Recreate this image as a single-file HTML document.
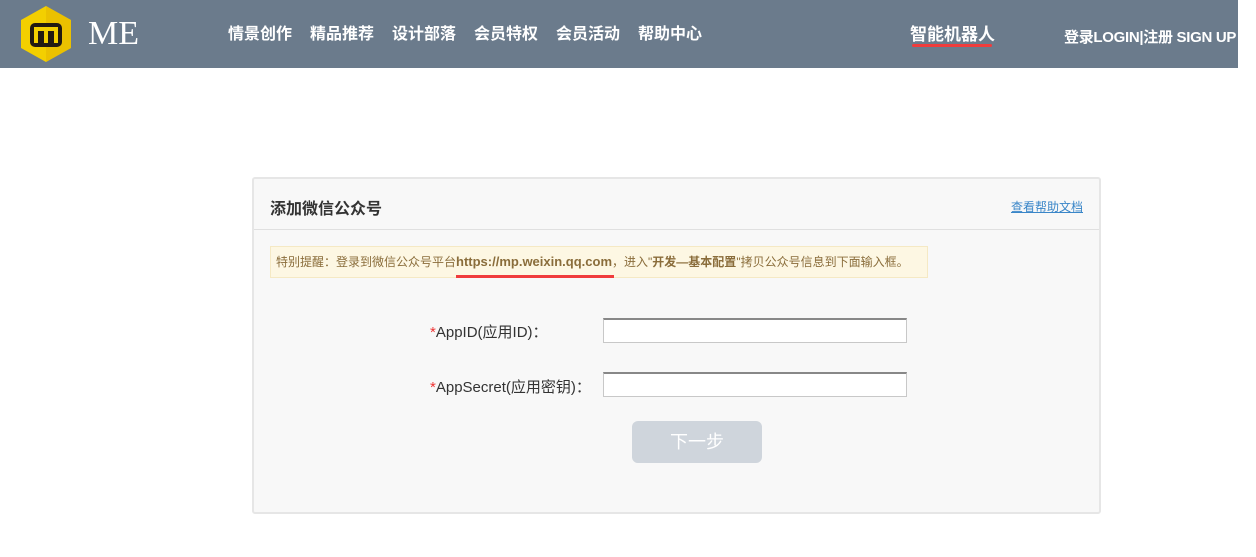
<!DOCTYPE html>
<html><head><meta charset="utf-8"><style>
*{margin:0;padding:0;box-sizing:border-box}
body{width:1256px;height:557px;background:#fff;font-family:"Liberation Sans","Noto Sans CJK SC",sans-serif;position:relative;overflow:hidden}
.hd{position:absolute;left:0;top:0;width:1238px;height:68px;background:#6b7b8c}
.nav{position:absolute;top:24px;color:#fff;font-size:16px;font-weight:bold;line-height:22px;white-space:nowrap}
.card{position:absolute;left:252px;top:177px;width:849px;height:337px;background:#f8f8f8;border:2px solid #e6e6e6;border-radius:3px}
.ct{position:absolute;left:0;top:0;width:100%;height:51px;border-bottom:1px solid #e0e0e0}
.lbl{position:absolute;font-size:15px;color:#333;white-space:nowrap}
.inp{position:absolute;left:603px;width:304px;height:25px;background:#fff;border:1px solid #c8c8c8;border-top:2px solid #888}
</style></head><body>
<div class="hd">
<svg style="position:absolute;left:19px;top:5px" width="54" height="58" viewBox="0 0 54 58"><polygon points="27,1 52,15 52,43 27,57 2,43 2,15" fill="#f3cf00"/><polygon points="27,1 52,15 52,43 27,57" fill="#e6b800" opacity=".6"/><rect x="11" y="18" width="32" height="24" rx="5" fill="#221a12"/><path d="M17 38V24h20v14M27 24v14" stroke="#f3cf00" stroke-width="4" fill="none"/></svg>
<div style="position:absolute;left:88px;top:14px;color:#fff;font-family:'Liberation Serif',serif;font-size:34px;line-height:40px">ME</div>
<div class="nav" style="left:228px">情景创作</div>
<div class="nav" style="left:310px">精品推荐</div>
<div class="nav" style="left:392px">设计部落</div>
<div class="nav" style="left:474px">会员特权</div>
<div class="nav" style="left:556px">会员活动</div>
<div class="nav" style="left:638px">帮助中心</div>
<div class="nav" style="left:910px;font-size:17px">智能机器人</div>
<div style="position:absolute;left:912px;top:44px;width:80px;height:3px;background:#f03c3c;border-radius:2px"></div>
<div class="nav" style="left:1064px;top:27px;font-size:15px;letter-spacing:-0.3px">登录LOGIN|注册 SIGN UP</div>
</div>
<div class="card">
<div class="ct"><div style="position:absolute;left:16px;top:16px;font-size:16px;font-weight:bold;color:#333">添加微信公众号</div>
<div style="position:absolute;right:16px;top:19px;font-size:12px;color:#3a86c8;text-decoration:underline">查看帮助文档</div></div>
<div style="position:absolute;left:16px;top:67px;width:658px;height:32px;background:#fdf7e3;border:1px solid #f5e9c4;font-size:12px;color:#8a6d3b;line-height:30px;padding-left:5px;white-space:nowrap">特别提醒：登录到微信公众号平台<b style="font-size:13px">https://mp.weixin.qq.com</b>，进入"<b>开发—基本配置</b>"拷贝公众号信息到下面输入框。</div>
<div style="position:absolute;left:202px;top:96px;width:158px;height:3px;background:#f03c3c"></div>
<div class="lbl" style="left:176px;top:142px"><span style="color:#e33">*</span>AppID(应用ID)：</div>
<div class="lbl" style="left:176px;top:197px"><span style="color:#e33">*</span>AppSecret(应用密钥)：</div>
</div>
<div class="inp" style="top:318px"></div>
<div class="inp" style="top:372px"></div>
<div style="position:absolute;left:632px;top:421px;width:130px;height:42px;background:#cfd5dc;border-radius:6px;color:#fff;font-size:18px;text-align:center;line-height:42px">下一步</div>
</body></html>
